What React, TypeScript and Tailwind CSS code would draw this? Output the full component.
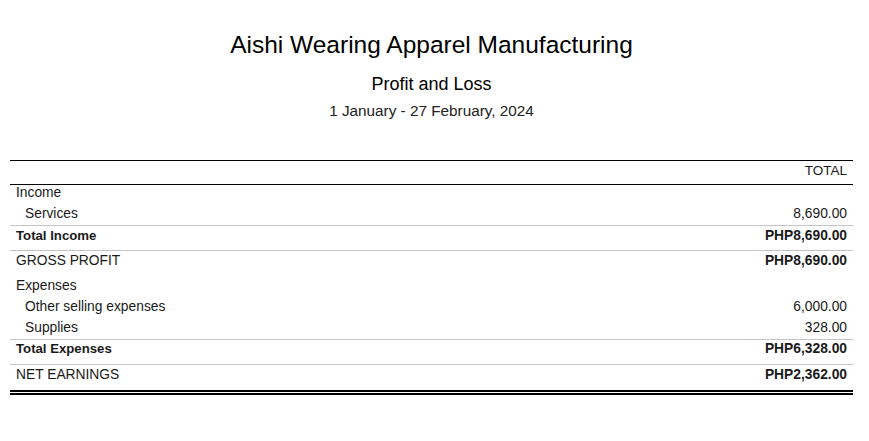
import React from "react";

type Row = {
  label: string;
  value?: string;
  indent?: boolean;
  bold?: boolean;
  boldValue?: boolean;
  border?: boolean;
  h: string;
  pt: string;
};

const rows: Row[] = [
  { label: "Income", h: "h-[19px]", pt: "pt-0" },
  { label: "Services", value: "8,690.00", indent: true, h: "h-[21px]", pt: "pt-[2px]" },
  { label: "Total Income", value: "PHP8,690.00", bold: true, boldValue: true, border: true, h: "h-[25px]", pt: "pt-[2px]" },
  { label: "GROSS PROFIT", value: "PHP8,690.00", boldValue: true, border: true, h: "h-[26px]", pt: "pt-[2px]" },
  { label: "Expenses", h: "h-[21px]", pt: "pt-[2px]" },
  { label: "Other selling expenses", value: "6,000.00", indent: true, h: "h-[21px]", pt: "pt-[2px]" },
  { label: "Supplies", value: "328.00", indent: true, h: "h-[21px]", pt: "pt-[2px]" },
  { label: "Total Expenses", value: "PHP6,328.00", bold: true, boldValue: true, border: true, h: "h-[25px]", pt: "pt-[1px]" },
  { label: "NET EARNINGS", value: "PHP2,362.00", boldValue: true, border: true, h: "h-[26px]", pt: "pt-[2px]" },
];

export default function App() {
  return (
    <div
      className="w-[869px] h-[441px] bg-white text-[#1a1a1a]"
      style={{ fontFamily: '"Liberation Sans", Arial, sans-serif' }}
    >
      <div className="ml-[10px] w-[843px]">
        <div className="flex flex-col items-center pt-[31px]">
          <div className="text-[24.5px] leading-[28px] text-black whitespace-nowrap">Aishi Wearing Apparel Manufacturing</div>
          <div className="text-[18px] leading-[22px] mt-[14px] text-black">Profit and Loss</div>
          <div className="text-[15.3px] leading-[18px] mt-[7px] text-[#222]">1 January - 27 February, 2024</div>
        </div>

        <div className="mt-[40px] leading-[15px]">
          <div className="border-t border-b border-black h-[25px] pt-[2px] flex justify-end pr-[6px] text-[13.5px]">
            <span>TOTAL</span>
          </div>
          {rows.map((r) => (
            <div
              key={r.label}
              className={`flex justify-between items-start pr-[6px] ${r.indent ? "pl-[15px]" : "pl-[6px]"} ${r.h} ${r.pt} ${
                r.border ? "border-t border-[#c4c4c4]" : ""
              }`}
            >
              <span className={r.bold ? "font-bold text-[13.2px]" : "text-[13.8px]"}>{r.label}</span>
              {r.value && (
                <span className={r.boldValue ? "font-bold text-[13.8px]" : "text-[13.8px]"}>{r.value}</span>
              )}
            </div>
          ))}
          <div className="h-[2px] bg-black" />
          <div className="h-[2px] bg-black mt-[1px]" />
        </div>
      </div>
    </div>
  );
}
